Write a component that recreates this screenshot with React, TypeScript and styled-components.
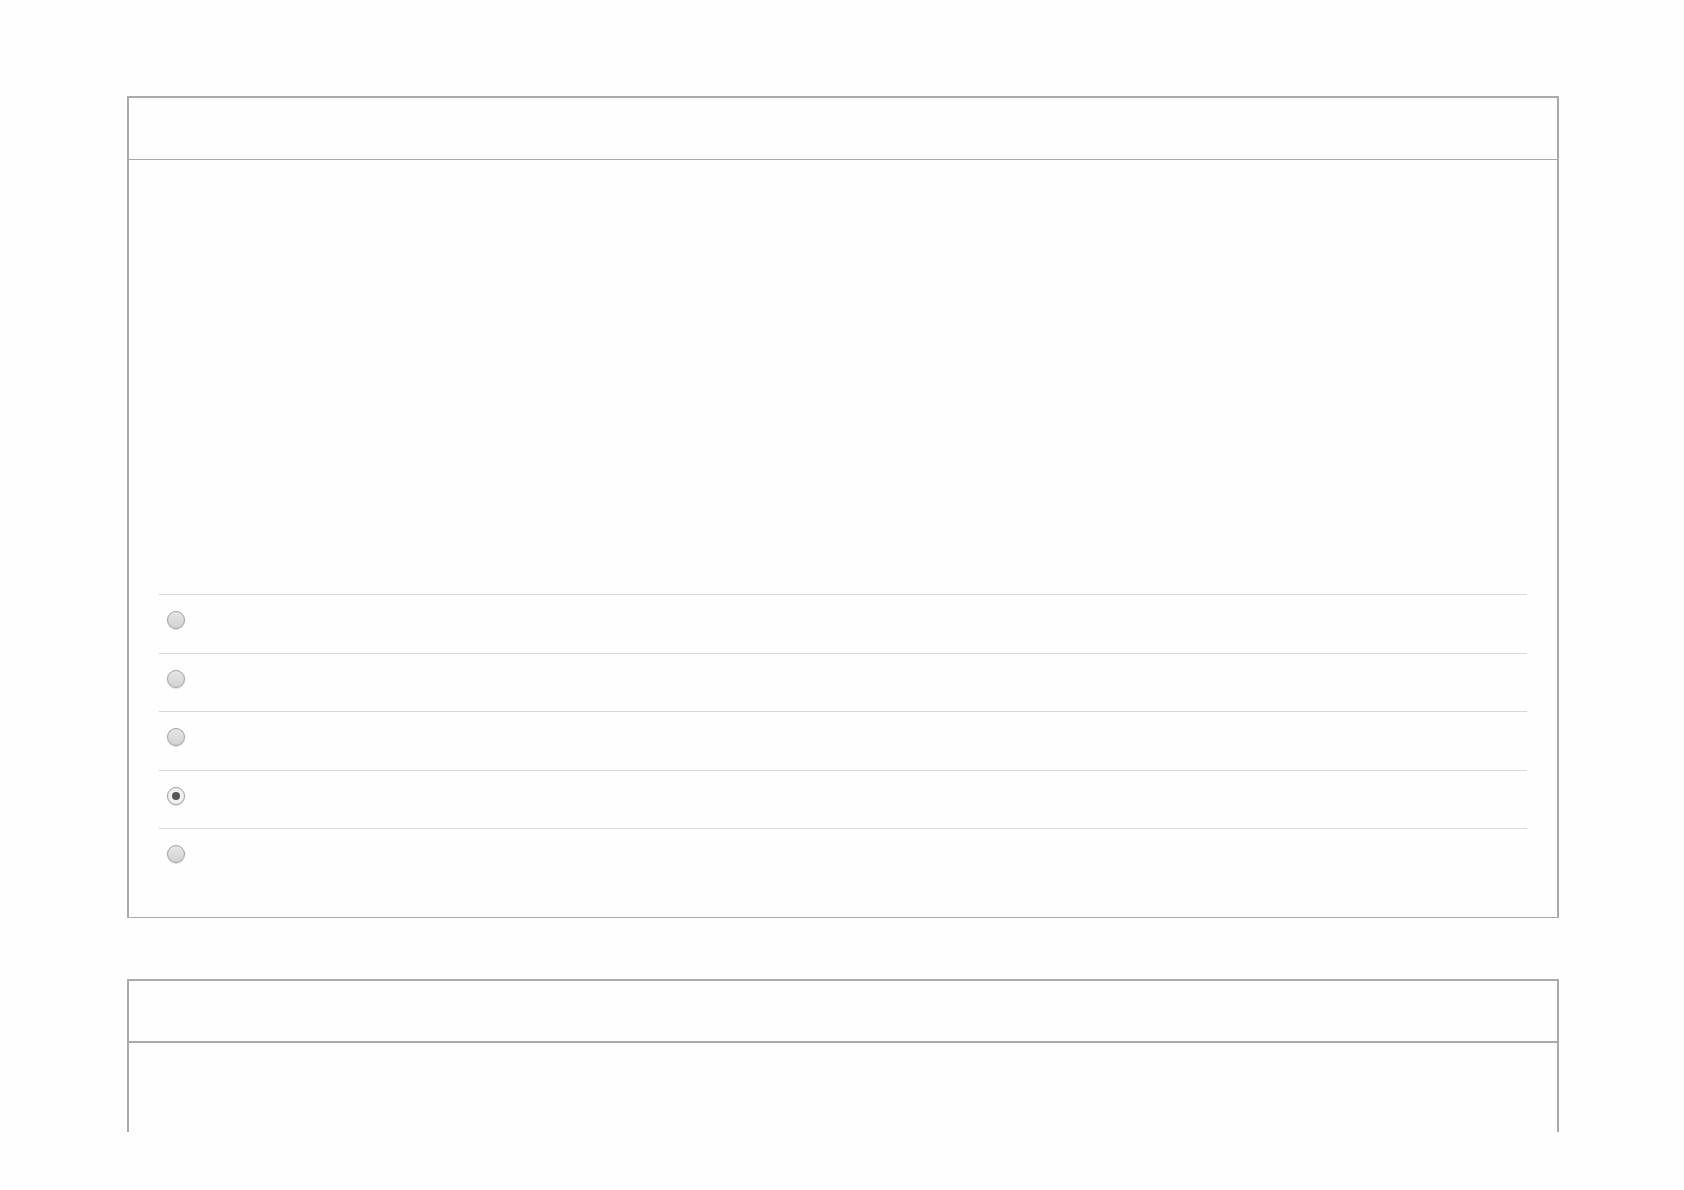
import React from 'react';
import styled, { createGlobalStyle } from 'styled-components';

const GlobalStyle = createGlobalStyle`
  html, body {
    margin: 0;
    padding: 0;
    background: #fefefe;
    font-family: "Liberation Sans", Arial, sans-serif;
  }
`;

const Page = styled.div`
  height: 1132px;
  overflow: hidden;
  padding: 96px 125px 0 127px;
  box-sizing: border-box;
  display: flex;
  flex-direction: column;
  gap: 61px;
`;

const Panel = styled.section<{ $bottom?: number }>`
  background: #fefefe;
  border: 2px solid #aaaaaa;
  border-bottom-width: ${p => (p.$bottom ?? 1)}px;
  flex-shrink: 0;
`;

const PanelHeader = styled.div<{ $line: number; $height: number }>`
  height: ${p => p.$height}px;
  border-bottom: ${p => p.$line}px solid #aaaaaa;
`;

const PanelBody = styled.div<{ $minHeight?: number }>`
  padding: 30px;
  min-height: ${p => p.$minHeight ?? 0}px;
`;

const Media = styled.div`
  height: 404px;
`;

const OptionList = styled.ul`
  list-style: none;
  margin: 0;
  padding: 0;
`;

const Option = styled.li`
  height: 58.6px;
  box-sizing: border-box;
  border-top: 1px solid #d8d8d8;
  display: flex;
  align-items: flex-start;
  padding: 16px 0 0 8px;
`;

const Radio = styled.span<{ $checked?: boolean }>`
  width: 18px;
  height: 18px;
  box-sizing: border-box;
  border-radius: 50%;
  border: 1.5px solid #a0a0a0;
  background: ${p =>
    p.$checked ? '#f0f0f0' : 'linear-gradient(#e6e6e6, #d2d2d2)'};
  box-shadow: 0 1px 1px rgba(0, 0, 0, 0.12);
  display: flex;
  align-items: center;
  justify-content: center;

  &::after {
    content: '';
    display: ${p => (p.$checked ? 'block' : 'none')};
    width: 8px;
    height: 8px;
    border-radius: 50%;
    background: #555555;
  }
`;

const options = [false, false, false, true, false];

export default function App() {
  return (
    <>
      <GlobalStyle />
      <Page>
        <Panel>
          <PanelHeader $line={1} $height={61} />
          <PanelBody>
            <Media />
            <OptionList>
              {options.map((checked, i) => (
                <Option key={i}>
                  <Radio $checked={checked} />
                </Option>
              ))}
            </OptionList>
          </PanelBody>
        </Panel>
        <Panel>
          <PanelHeader $line={2} $height={60} />
          <PanelBody $minHeight={400} />
        </Panel>
      </Page>
    </>
  );
}
